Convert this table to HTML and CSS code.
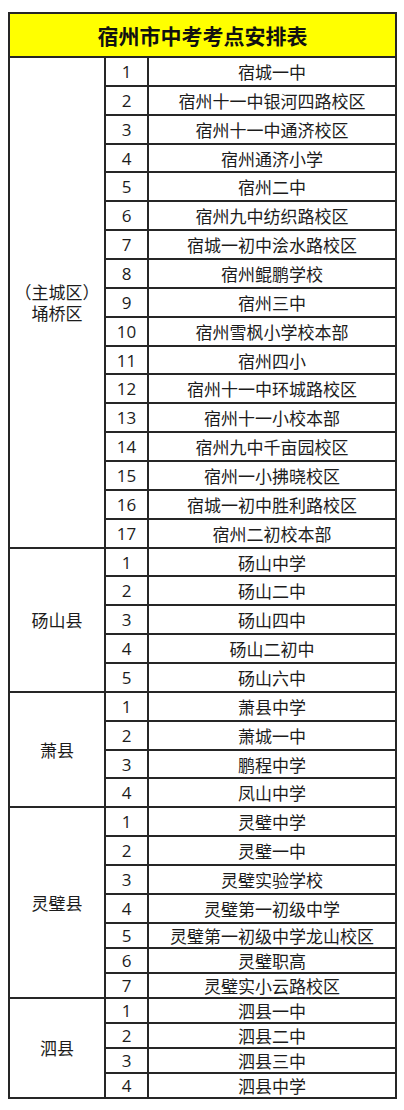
FILE: index.html
```html
<!DOCTYPE html>
<html lang="zh-CN">
<head>
<meta charset="utf-8">
<title>宿州市中考考点安排表</title>
<link rel="stylesheet" href="styles.css">
</head>
<body>
<div class="sheet">
  <div class="title">宿州市中考考点安排表</div>

  <div class="area span-17"><span class="line">（主城区）</span><span class="line">埇桥区</span></div>
  <div class="no">1</div><div class="school">宿城一中</div>
  <div class="no">2</div><div class="school">宿州十一中银河四路校区</div>
  <div class="no">3</div><div class="school">宿州十一中通济校区</div>
  <div class="no">4</div><div class="school">宿州通济小学</div>
  <div class="no">5</div><div class="school">宿州二中</div>
  <div class="no">6</div><div class="school">宿州九中纺织路校区</div>
  <div class="no">7</div><div class="school">宿城一初中浍水路校区</div>
  <div class="no">8</div><div class="school">宿州鲲鹏学校</div>
  <div class="no">9</div><div class="school">宿州三中</div>
  <div class="no">10</div><div class="school">宿州雪枫小学校本部</div>
  <div class="no">11</div><div class="school">宿州四小</div>
  <div class="no">12</div><div class="school">宿州十一中环城路校区</div>
  <div class="no">13</div><div class="school">宿州十一小校本部</div>
  <div class="no">14</div><div class="school">宿州九中千亩园校区</div>
  <div class="no">15</div><div class="school">宿州一小拂晓校区</div>
  <div class="no">16</div><div class="school">宿城一初中胜利路校区</div>
  <div class="no">17</div><div class="school">宿州二初校本部</div>

  <div class="area span-5">砀山县</div>
  <div class="no">1</div><div class="school">砀山中学</div>
  <div class="no">2</div><div class="school">砀山二中</div>
  <div class="no">3</div><div class="school">砀山四中</div>
  <div class="no">4</div><div class="school">砀山二初中</div>
  <div class="no">5</div><div class="school">砀山六中</div>

  <div class="area span-4">萧县</div>
  <div class="no">1</div><div class="school">萧县中学</div>
  <div class="no">2</div><div class="school">萧城一中</div>
  <div class="no">3</div><div class="school">鹏程中学</div>
  <div class="no">4</div><div class="school">凤山中学</div>

  <div class="area span-7">灵璧县</div>
  <div class="no">1</div><div class="school">灵璧中学</div>
  <div class="no">2</div><div class="school">灵璧一中</div>
  <div class="no">3</div><div class="school">灵璧实验学校</div>
  <div class="no">4</div><div class="school">灵璧第一初级中学</div>
  <div class="no">5</div><div class="school">灵璧第一初级中学龙山校区</div>
  <div class="no">6</div><div class="school">灵璧职高</div>
  <div class="no">7</div><div class="school">灵璧实小云路校区</div>

  <div class="area span-4">泗县</div>
  <div class="no">1</div><div class="school">泗县一中</div>
  <div class="no">2</div><div class="school">泗县二中</div>
  <div class="no">3</div><div class="school">泗县三中</div>
  <div class="no">4</div><div class="school">泗县中学</div>
</div>
</body>
</html>
```

FILE: styles.css
```css
html, body {
  margin: 0;
  padding: 0;
  background: #ffffff;
}

body {
  padding: 12px 0 0 8px;
  font-family: "Open Sans", "Noto Sans CJK SC", sans-serif;
  color: #1c1c1c;
}

.sheet {
  width: 389px;
  box-sizing: border-box;
  display: grid;
  grid-template-columns: 94px 41px 246px;
  grid-template-rows: 42px repeat(30, 26.87px) repeat(7, 23px);
  gap: 2px;
  padding: 2px;
  background: #262626;
}

.sheet > div {
  background: #ffffff;
  display: flex;
  align-items: center;
  justify-content: center;
  text-align: center;
  font-size: 17px;
  line-height: 21px;
  white-space: nowrap;
}

.sheet > .title {
  grid-column: 1 / span 3;
  background: #ffff00;
  font-family: "Noto Sans CJK SC", sans-serif;
  font-weight: 700;
  font-size: 21px;
  color: #111111;
}

.sheet > .area {
  grid-column: 1;
  flex-direction: column;
  gap: 1px;
  font-family: "Noto Sans CJK SC", sans-serif;
}

.area .line {
  display: block;
  line-height: 20px;
}

.span-17 { grid-row: span 17; }
.span-7 { grid-row: span 7; }
.span-5 { grid-row: span 5; }
.span-4 { grid-row: span 4; }

.sheet > .no {
  grid-column: 2;
}

.sheet > .school {
  grid-column: 3;
  font-family: "Noto Sans CJK SC", sans-serif;
}
```
